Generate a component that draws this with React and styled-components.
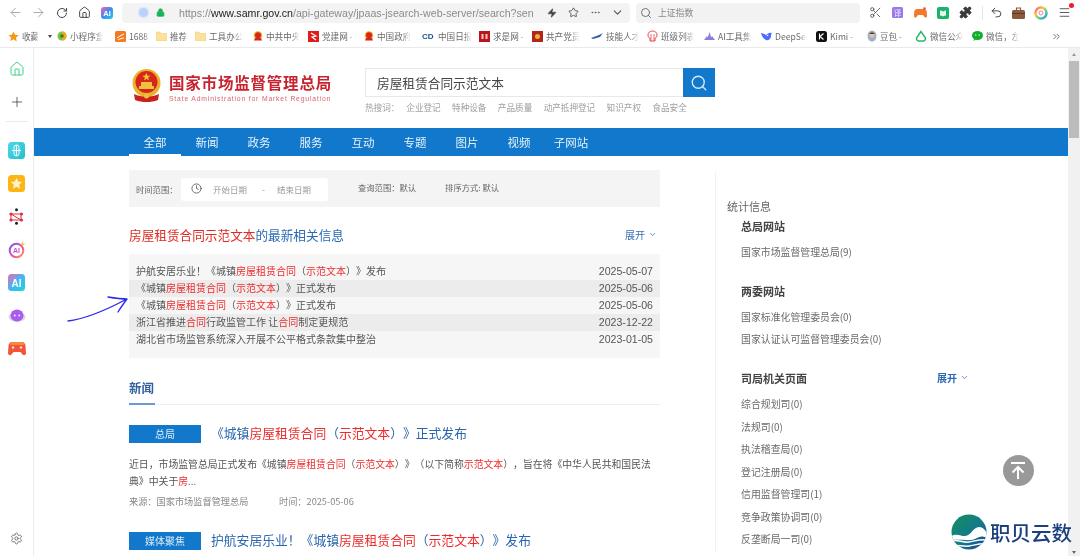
import React from 'react'
import styled, { createGlobalStyle } from 'styled-components'
import {
  ArrowLeft, ArrowRight, RotateCw, Home, Zap, Star, MoreHorizontal, ChevronDown, Search,
  Scissors, Puzzle, Undo2, Menu, Plus, Clock, Settings, ChevronsRight, Lock
} from 'lucide-react'

const CJK = '"Noto Sans CJK SC", "Liberation Sans", sans-serif'
const BLUE = '#1178cb'
const RED = '#ee2b2b'

const GlobalStyle = createGlobalStyle`
  html, body { margin: 0; padding: 0; background: #fff; overflow: hidden; }
  body { font-family: ${CJK}; text-spacing-trim: space-all; }
  * { box-sizing: border-box; }
`

const Em = styled.span`
  color: ${RED};
`

const Page = styled.div`
  position: relative;
  width: 1080px;
  height: 556px;
  overflow: hidden;
  display: flex;
  flex-direction: column;
  background: #fff;
  filter: blur(0.45px);
`

/* browser chrome */
const Toolbar = styled.div`
  height: 24px;
  display: flex;
  align-items: center;
  padding-left: 4px;
  padding-top: 1px;
  flex: none;
`

const Cell = styled.div`
  width: ${p => p.$w || 23}px;
  height: 20px;
  flex: none;
  display: flex;
  align-items: center;
  justify-content: center;
  color: ${p => p.$color || '#444'};
`

const UrlBar = styled.div`
  width: 508px;
  height: 20px;
  margin-left: 5px;
  background: #f3f3f3;
  border-radius: 4px;
  display: flex;
  align-items: center;
  padding-left: 17px;
  flex: none;
`

const UrlDot = styled.div`
  width: 9px;
  height: 9px;
  border-radius: 50%;
  background: #b9d2fb;
  box-shadow: 0 0 0 1.5px #dfe9fb;
  margin-right: 8px;
`

const UrlText = styled.div`
  margin-left: 14px;
  width: 356px;
  overflow: hidden;
  white-space: nowrap;
  font: 10.65px "Liberation Sans", sans-serif;
  color: #8b8b8b;
  b { font-weight: 400; color: #222; }
`

const UrlActions = styled.div`
  margin-left: auto;
  display: flex;
  padding-right: 2px;
`

const SearchBar = styled.div`
  width: 224px;
  height: 20px;
  margin-left: 6px;
  background: #f2f2f2;
  border-radius: 4px;
  display: flex;
  align-items: center;
  padding-left: 4px;
  gap: 6px;
  flex: none;
  font-size: 8.8px;
  color: #888;
`

const ToolIcons = styled.div`
  margin-left: 4px;
  display: flex;
  align-items: center;
  position: relative;
`

const ToolDivider = styled.div`
  width: 1px;
  height: 14px;
  background: #e6e6e6;
  margin: 0 3px 0 5px;
`

const RedDot = styled.div`
  position: absolute;
  right: 1.5px;
  top: 0;
  width: 5px;
  height: 5px;
  border-radius: 50%;
  background: #f01c2c;
`

const Bookmarks = styled.div`
  height: 24px;
  display: flex;
  align-items: center;
  padding-left: 8px;
  padding-top: 1px;
  border-bottom: 1px solid #eaeaea;
  flex: none;
`

const Bookmark = styled.div`
  width: ${p => p.$w}px;
  flex: none;
  display: flex;
  align-items: center;
  gap: 3px;
  overflow: hidden;
  position: relative;
`

const BookmarkText = styled.span`
  font-size: 8.6px;
  color: #6a6a6a;
  white-space: nowrap;
  width: ${p => p.$w}px;
  overflow: hidden;
  flex: none;
  -webkit-mask-image: linear-gradient(90deg, #000 75%, transparent);
`

const Caret = styled.span`
  width: 0;
  height: 0;
  margin-left: 6px;
  border-left: 2.5px solid transparent;
  border-right: 2.5px solid transparent;
  border-top: 3px solid #444;
`

const More = styled.div`
  margin-left: 0;
  color: #666;
  display: flex;
`

/* page body */
const Body = styled.div`
  flex: 1;
  min-height: 0;
  display: flex;
`

const Sidebar = styled.aside`
  width: 34px;
  flex: none;
  border-right: 1px solid #ececec;
  display: flex;
  flex-direction: column;
  padding-top: 4px;
  padding-bottom: 1px;
`

const SideCell = styled.div`
  height: 33px;
  width: 33px;
  display: flex;
  align-items: center;
  justify-content: center;
  flex: none;
`

const SideDivider = styled.div`
  height: 1px;
  width: 22px;
  background: #eaeaea;
  margin: 3px 0 12px 6px;
  flex: none;
`

const SideBottom = styled.div`
  margin-top: auto;
`

const Main = styled.main`
  flex: 1;
  min-width: 0;
  overflow: hidden;
`

const Header = styled.header`
  height: 80px;
  padding-left: 97px;
  display: flex;
`

const Emblem = styled.div`
  margin-top: 21px;
  width: 32px;
  flex: none;
`

const Brand = styled.div`
  margin-left: 6px;
  padding-top: 25px;
  width: 196px;
  flex: none;
`

const BrandName = styled.div`
  font-size: 15.5px;
  line-height: 18px;
  font-weight: 700;
  letter-spacing: 0.8px;
  color: #c8242f;
  white-space: nowrap;
`

const BrandSub = styled.div`
  font: 6.8px/10px "Liberation Sans", sans-serif;
  letter-spacing: 0.83px;
  color: #d9646c;
  white-space: nowrap;
  margin-top: 3px;
`

const SearchCol = styled.div`
  padding-top: 20px;
  width: 350px;
  flex: none;
`

const SearchBox = styled.div`
  height: 29px;
  display: flex;
  border: 1px solid #e8e8e8;
  border-right: 0;
  width: 350px;
`

const SearchInput = styled.div`
  flex: 1;
  padding-left: 11px;
  font-size: 12.7px;
  line-height: 27px;
  color: #444;
`

const SearchButton = styled.div`
  width: 32px;
  height: 29px;
  margin-top: -1px;
  background: ${BLUE};
  display: flex;
  align-items: center;
  justify-content: center;
  color: #d8ebfb;
`

const HotWords = styled.div`
  display: flex;
  gap: 11.4px;
  margin-top: 4px;
  font-size: 8.6px;
  line-height: 12px;
  color: #a0a0a0;
  white-space: nowrap;
`

const HotLabel = styled.span`
  margin-right: -4.5px;
`

const NavBar = styled.nav`
  height: 28px;
  background: ${BLUE};
  padding-left: 95px;
  display: flex;
`

const NavTab = styled.div`
  width: 52px;
  text-align: center;
  font-size: 11.5px;
  line-height: 29px;
  color: #e6f2fb;
  white-space: nowrap;
  border-bottom: 2px solid ${p => (p.$active ? '#fff' : 'transparent')};
`

const Content = styled.div`
  display: flex;
  padding-left: 95px;
`

const Results = styled.section`
  width: 531px;
  flex: none;
  padding-top: 14px;
`

const FilterBar = styled.div`
  height: 37px;
  background: #f4f4f4;
  display: flex;
  align-items: center;
  padding-left: 7px;
  font-size: 8.3px;
  color: #666;
  white-space: nowrap;
`

const FilterLabel = styled.span`
  width: 45px;
  flex: none;
`

const DateBox = styled.div`
  width: 147px;
  height: 23px;
  background: #fff;
  border-radius: 3px;
  display: flex;
  align-items: center;
  padding-left: 10px;
  padding-bottom: 2px;
  color: #999;
  margin-top: 2px;
  flex: none;
`

const DateText = styled.span`
  font-size: 8.5px;
  margin-left: ${p => p.$gap}px;
`

const FilterItem = styled.span`
  margin-left: ${p => p.$gap}px;
  margin-top: -4px;
`

const LatestHead = styled.div`
  display: flex;
  align-items: center;
  justify-content: space-between;
  height: 20px;
  margin-top: 17px;
  font-size: 12.65px;
  color: #2a6ab4;
  white-space: nowrap;
`

const LatestTitle = styled.div`
  color: #2a6ab4;
  span { color: #df2a22; }
`

const Expand = styled.div`
  display: flex;
  align-items: center;
  gap: 3px;
  font-size: 10px;
  color: ${p => p.$color || '#3b70b8'};
  font-weight: ${p => (p.$bold ? 700 : 400)};
  padding-right: ${p => p.$pad || 0}px;
`

const LatestPanel = styled.div`
  margin-top: 10px;
  height: 104px;
  padding-top: 8.5px;
  background: #f6f6f6;
`

const LatestRow = styled.div`
  height: 17px;
  padding: 0 7px;
  display: flex;
  align-items: center;
  justify-content: space-between;
  font-size: 10px;
  color: #555;
  white-space: nowrap;
  background: ${p => (p.$shade ? '#ececec' : 'transparent')};
`

const RowText = styled.span`
  padding-bottom: 2px;
`

const RowDate = styled.span`
  font: 10.6px "Liberation Sans", sans-serif;
  color: #555;
`

const SectionHead = styled.div`
  margin-top: 20px;
  height: 27px;
  border-bottom: 1px solid #eeeeee;
  display: flex;
`

const SectionTitle = styled.div`
  width: 26px;
  height: 27px;
  border-bottom: 2px solid #6f97cf;
  font-size: 12.5px;
  line-height: 19px;
  font-weight: 700;
  color: #31609f;
  white-space: nowrap;
`

const NewsItem = styled.article`
  margin-top: ${p => p.$top}px;
`

const NewsHead = styled.div`
  display: flex;
  align-items: center;
  gap: 10px;
`

const Tag = styled.span`
  width: 72px;
  height: 18px;
  background: ${BLUE};
  color: #dcecf9;
  text-align: center;
  font-size: 10px;
  line-height: 18px;
  flex: none;
`

const NewsTitle = styled.h3`
  margin: 0;
  padding-bottom: 2px;
  font-size: 12.8px;
  line-height: 18px;
  font-weight: 400;
  color: #2a66ae;
  white-space: nowrap;
`

const NewsText = styled.p`
  margin: 12px 0 0;
  font-size: 9.85px;
  line-height: 17px;
  color: #555;
`

const NewsMeta = styled.div`
  margin-top: 3px;
  display: flex;
  font-size: 9.2px;
  line-height: 16px;
  color: #888;
  white-space: nowrap;
`

const MetaSource = styled.span`
  width: 150px;
  flex: none;
`

const Stats = styled.aside`
  margin-left: 55px;
  margin-top: 16px;
  width: 290px;
  flex: none;
  border-left: 1px solid #f0f0f0;
  padding: 26px 0 0 11px;
`

const StatsTitle = styled.div`
  font-size: 11px;
  line-height: 16px;
  color: #666;
`

const StatsGroup = styled.div`
  padding-left: 14px;
  margin-top: ${p => p.$top}px;
`

const GroupHead = styled.div`
  height: 22.5px;
  width: 228px;
  display: flex;
  align-items: center;
  justify-content: space-between;
  font-size: 11px;
  font-weight: 700;
  color: #444;
  margin-bottom: ${p => p.$after || 3}px;
`

const StatItem = styled.div`
  height: 22.5px;
  line-height: 22.5px;
  font-size: 9.9px;
  color: #6a6a6a;
  white-space: nowrap;
`

const Scrollbar = styled.div`
  width: 12px;
  flex: none;
  background: #f1f1f1;
  display: flex;
  flex-direction: column;
  align-items: center;
  padding-top: 5px;
`

const ScrollArrow = styled.div`
  width: 0;
  height: 0;
  border-left: 2.5px solid transparent;
  border-right: 2.5px solid transparent;
  ${p => (p.$down ? 'border-top: 3px solid #666; margin-top: auto; margin-bottom: 2px;' : 'border-bottom: 3px solid #999;')}
`

const ScrollThumb = styled.div`
  width: 10px;
  height: 77px;
  margin-top: 5px;
  background: #bcbcbc;
`

/* things lying over the page */
const Annotation = styled.svg`
  position: absolute;
  left: 60px;
  top: 290px;
`

const BackTop = styled.div`
  position: absolute;
  left: 1002.5px;
  top: 454.5px;
  width: 31px;
  height: 31px;
  border-radius: 50%;
  background: #999;
  display: flex;
  align-items: center;
  justify-content: center;
`

const Watermark = styled.div`
  position: absolute;
  left: 951px;
  top: 514px;
  display: flex;
  align-items: center;
  gap: 3px;
`

const WatermarkText = styled.span`
  font-size: 20.5px;
  line-height: 36px;
  font-weight: 500;
  color: #1c3f7e;
  white-space: nowrap;
`

const CdMark = styled.span`
  font: 700 8px "Liberation Sans", sans-serif;
  color: #174f96;
  width: 13px;
`

const Favicon = ({ kind }) => {
  switch (kind) {
    case 'star':
      return <svg width="11" height="11" viewBox="0 0 24 24"><path d="M12 1l3.4 7.3 7.9 1-5.8 5.5 1.5 7.9L12 18l-7 3.7 1.500-7.900L.7 9.300l7.900-1z" fill="#f39a12" /></svg>
    case 'mini':
      return <svg width="10" height="10" viewBox="0 0 10 10"><circle cx="5" cy="5" r="4.500" fill="#7cc243" /><path d="M5 .5a4.500 4.500 0 0 1 0 9z" fill="#f2a91c" /><circle cx="5" cy="5" r="1.800" fill="#2f7d3a" /></svg>
    case '1688':
      return <svg width="11" height="11" viewBox="0 0 11 11"><rect width="11" height="11" rx="1.500" fill="#f47a20" /><path d="M2 7c2-1 4-3 7-4M3 9c2-1 4-2 6-2" stroke="#fff" strokeWidth="1" fill="none" /></svg>
    case 'folder':
      return <svg width="11" height="10" viewBox="0 0 11 10"><path d="M0 1h4l1 1.500h6V10H0z" fill="#fbe19a" stroke="#eccb70" strokeWidth=".5" /></svg>
    case 'gov':
      return <svg width="10" height="11" viewBox="0 0 10 11"><circle cx="5" cy="4.500" r="4.200" fill="#e8b023" /><circle cx="5" cy="4.200" r="3" fill="#d9261c" /><path d="M1 9.500h8L8 7H2z" fill="#d9261c" /></svg>
    case 'party':
      return <svg width="11" height="11" viewBox="0 0 11 11"><rect width="11" height="11" fill="#e01b1b" /><path d="M3 2l5 3-4 1 4 3" stroke="#fff" strokeWidth="1.200" fill="none" /></svg>
    case 'cd':
      return <CdMark>CD</CdMark>
    case 'qs':
      return <svg width="11" height="11" viewBox="0 0 11 11"><rect width="11" height="11" fill="#b9151b" /><path d="M2.500 3h2v5h-2zM6.500 3h2v5h-2z" fill="#f3c9c9" /></svg>
    case 'cp':
      return <svg width="11" height="11" viewBox="0 0 11 11"><rect width="11" height="11" fill="#b3261c" /><circle cx="5.500" cy="5.500" r="2.500" fill="#e9b53a" /></svg>
    case 'skill':
      return <svg width="12" height="8" viewBox="0 0 12 8"><path d="M0 6l8-3 4-2-3 4-7 2z" fill="#3a5f9e" /></svg>
    case 'class':
      return <svg width="11" height="12" viewBox="0 0 11 12"><path d="M5.500 1C3 1 1 2.500 1 5c0 2 1 3 2 3v3h5V8c1 0 2-1 2-3 0-2.500-2-4-4.500-4z" fill="none" stroke="#e8474c" strokeWidth="1" /><path d="M4 4v7M7 4v7" stroke="#e8474c" strokeWidth=".8" /></svg>
    case 'aitools':
      return <svg width="11" height="8" viewBox="0 0 11 8"><path d="M0 8l3-4 2 4zM3 8l2.500-8L8 8zM6 8l2-4 3 4z" fill="#8f7be0" /></svg>
    case 'deepseek':
      return <svg width="11" height="9" viewBox="0 0 11 9"><path d="M0 1c2 0 3 1 5 2 2-1 3-3 6-2-1 1-1 2-1 3 0 3-3 5-5 4S1 5 0 1z" fill="#4d6bfe" /><circle cx="6.500" cy="3.500" r=".8" fill="#fff" /></svg>
    case 'kimi':
      return <svg width="11" height="11" viewBox="0 0 11 11"><rect width="11" height="11" rx="2.500" fill="#111" /><path d="M3.500 2.500v6M7.500 2.500L4 5.500l3.500 3" stroke="#fff" strokeWidth="1.100" fill="none" /></svg>
    case 'doubao':
      return <svg width="10" height="12" viewBox="0 0 10 12"><ellipse cx="5" cy="6" rx="4.500" ry="5.500" fill="#9db2c8" /><circle cx="5" cy="5" r="2.500" fill="#e8c2a8" /><path d="M2.500 4c0-2 5-2 5 0z" fill="#4b3a30" /></svg>
    case 'mp':
      return <svg width="12" height="12" viewBox="0 0 12 12"><path d="M6 1.500L1.500 8a2.500 2.500 0 0 0 2 3h5a2.500 2.500 0 0 0 2-3z" fill="none" stroke="#27b56a" strokeWidth="1.500" /></svg>
    case 'wechat':
      return <svg width="11" height="10" viewBox="0 0 11 10"><ellipse cx="5.500" cy="4.500" rx="5.500" ry="4.500" fill="#12ad2b" /><path d="M2 8l-.5 2L4 8.500z" fill="#12ad2b" /><circle cx="3.800" cy="4" r=".7" fill="#fff" /><circle cx="7.200" cy="4" r=".7" fill="#fff" /></svg>
    default:
      return null
  }
}

const BOOKMARKS = [
  { kind: 'star', label: '收藏', w: 49, text: 17, caret: true },
  { kind: 'mini', label: '小程序盒', w: 58, text: 33 },
  { kind: '1688', label: '1688', w: 41, text: 21 },
  { kind: 'folder', label: '推荐', w: 39, text: 18 },
  { kind: 'folder', label: '工具办公', w: 58, text: 34 },
  { kind: 'gov', label: '中共中央', w: 55, text: 34 },
  { kind: 'party', label: '党建网 -', w: 56, text: 34 },
  { kind: 'gov', label: '中国政府', w: 58, text: 34 },
  { kind: 'cd', label: '中国日报', w: 57, text: 34 },
  { kind: 'qs', label: '求是网 -', w: 53, text: 34 },
  { kind: 'cp', label: '共产党员', w: 59, text: 34 },
  { kind: 'skill', label: '技能人才', w: 56, text: 33 },
  { kind: 'class', label: '班级列表', w: 57, text: 33 },
  { kind: 'aitools', label: 'AI工具集', w: 57, text: 34 },
  { kind: 'deepseek', label: 'DeepSeek', w: 55, text: 32 },
  { kind: 'kimi', label: 'Kimi -', w: 51, text: 26 },
  { kind: 'doubao', label: '豆包 -', w: 48, text: 25 },
  { kind: 'mp', label: '微信公众', w: 57, text: 33 },
  { kind: 'wechat', label: '微信，左', w: 79, text: 33 }
]

const HOT_WORDS = ['企业登记', '特种设备', '产品质量', '动产抵押登记', '知识产权', '食品安全']
const TABS = ['全部', '新闻', '政务', '服务', '互动', '专题', '图片', '视频', '子网站']

const RENT = <Em>房屋租赁合同</Em>
const SAMPLE = <Em>示范文本</Em>
const HOUSING = <>《城镇{RENT}（{SAMPLE}）》</>

const SIDE_APPS = [
  <svg width="17" height="17" viewBox="0 0 17 17" key="a"><defs><linearGradient id="sa" x1="0" y1="0" x2="1" y2="1"><stop offset="0" stopColor="#4fd5ec" /><stop offset="1" stopColor="#1fc3c9" /></linearGradient></defs><rect width="17" height="17" rx="3.500" fill="url(#sa)" /><path d="M8.500 3v11M4 8.500h9" stroke="#fff" strokeWidth="1.200" /><rect x="6" y="3" width="5" height="11" rx="2.500" fill="none" stroke="#fff" strokeWidth="1" /></svg>,
  <svg width="17" height="17" viewBox="0 0 17 17" key="b"><rect width="17" height="17" rx="3.500" fill="#fdb515" /><path d="M8.500 3l1.700 3.600 3.900.5-2.900 2.700.8 3.900-3.500-2-3.500 2 .8-3.900L2.900 7.100l3.900-.5z" fill="#fff4c8" /></svg>,
  <svg width="17" height="17" viewBox="0 0 17 17" key="c"><path d="M3 6h10v6H3zM3 6l10 6" stroke="#e03040" strokeWidth="1" fill="none" /><circle cx="8.500" cy="1.800" r="1.500" fill="#222" /><circle cx="8.500" cy="15.200" r="1.500" fill="#222" /><circle cx="3" cy="6" r="1.600" fill="#e03040" /><circle cx="13.500" cy="6" r="1.600" fill="#e03040" /><circle cx="3" cy="12" r="1.600" fill="#e03040" /><circle cx="13.500" cy="12" r="1.600" fill="#e03040" /></svg>,
  <svg width="18" height="18" viewBox="0 0 18 18" key="d"><defs><linearGradient id="sd" x1="0" y1="0" x2="1" y2="1"><stop offset="0" stopColor="#7a55f0" /><stop offset=".6" stopColor="#ee4fb0" /><stop offset="1" stopColor="#ffa53a" /></linearGradient></defs><circle cx="8.500" cy="9.500" r="6.800" fill="none" stroke="url(#sd)" strokeWidth="2" /><path d="M14.500 .5l.8 2 2 .8-2 .8-.8 2-.8-2-2-.8 2-.8z" fill="#f7c23c" /><text x="8.500" y="12" fontSize="7" fontWeight="700" textAnchor="middle" fill="#d04fc8" fontFamily="Liberation Sans">AI</text></svg>,
  <svg width="17" height="17" viewBox="0 0 17 17" key="e"><defs><linearGradient id="se" x1="0" y1="0" x2="1" y2="1"><stop offset="0" stopColor="#ff62b0" /><stop offset=".5" stopColor="#3fb8f5" /><stop offset="1" stopColor="#1ed3d8" /></linearGradient></defs><rect width="17" height="17" rx="3.500" fill="url(#se)" /><text x="8.500" y="12.500" fontSize="10" fontWeight="700" textAnchor="middle" fill="#fff" fontFamily="Liberation Sans">AI</text></svg>,
  <svg width="18" height="14" viewBox="0 0 18 14" key="f"><ellipse cx="9" cy="8" rx="8.500" ry="5" fill="#d9d9de" /><ellipse cx="9" cy="6.500" rx="6.500" ry="6" fill="#a95cf0" /><circle cx="6.800" cy="6.500" r="1" fill="#f0e6ff" /><circle cx="11.200" cy="6.500" r="1" fill="#f0e6ff" /></svg>,
  <svg width="18" height="15" viewBox="0 0 18 15" key="g"><path d="M4 1h10c2 0 3 1 3.500 4L18 12c0 2-2 3-3.500 1.500L12.500 11h-7l-2 2.500C2 15 0 14 0 12l.5-7C1 2 2 1 4 1z" fill="#f2553c" /><rect x="2" y="1" width="14" height="3" rx="1.500" fill="#f88a3e" /><circle cx="5" cy="6.500" r="1.200" fill="#ffd9c7" /><circle cx="13" cy="6.500" r="1.200" fill="#ffd9c7" /></svg>
]

export default function App() {
  return (
    <Page>
      <GlobalStyle />
      <Toolbar>
        <Cell $color="#aaa"><ArrowLeft size={15} strokeWidth={1.600} /></Cell>
        <Cell $color="#aaa"><ArrowRight size={15} strokeWidth={1.600} /></Cell>
        <Cell><RotateCw size={12} strokeWidth={2} /></Cell>
        <Cell><Home size={13} strokeWidth={1.800} /></Cell>
        <Cell $w={21}>
          <svg width="12" height="12" viewBox="0 0 12 12">
            <defs><linearGradient id="ai" x1="0" y1="0" x2="1" y2="1"><stop offset="0" stopColor="#ff5db1" /><stop offset=".5" stopColor="#3e8cf5" /><stop offset="1" stopColor="#19d3dc" /></linearGradient></defs>
            <rect width="12" height="12" rx="3" fill="url(#ai)" />
            <text x="6" y="9" fontSize="7.500" fontWeight="700" textAnchor="middle" fill="#fff" fontFamily="Liberation Sans">AI</text>
          </svg>
        </Cell>
        <UrlBar>
          <UrlDot />
          <Lock size={9} color="#16b25a" fill="#16b25a" strokeWidth={2} />
          <UrlText>https://<b>www.samr.gov.cn</b>/api-gateway/jpaas-jsearch-web-server/search?sen</UrlText>
          <UrlActions>
            <Cell $w={22}><Zap size={10} fill="#444" strokeWidth={1.500} /></Cell>
            <Cell $w={21}><Star size={11} strokeWidth={1.800} /></Cell>
            <Cell $w={22} $color="#666"><MoreHorizontal size={11} /></Cell>
            <Cell $w={22} $color="#555"><ChevronDown size={13} /></Cell>
          </UrlActions>
        </UrlBar>
        <SearchBar>
          <Search size={12} color="#555" strokeWidth={1.600} />
          上证指数
        </SearchBar>
        <ToolIcons>
          <Cell $w={22.500} $color="#555"><Scissors size={13} strokeWidth={1.600} /></Cell>
          <Cell $w={22.500}>
            <svg width="11" height="11" viewBox="0 0 11 11"><rect width="11" height="11" rx="1.500" fill="#9a78ee" /><text x="5.500" y="8.500" fontSize="7.500" textAnchor="middle" fill="#f2ecff" fontFamily="Noto Sans CJK SC">译</text></svg>
          </Cell>
          <Cell $w={22.500}>
            <svg width="13" height="11" viewBox="0 0 13 11"><path d="M3 2h7c1.500 0 2.500 1 2.800 3l.2 4c0 1.500-1.500 2-2.500 1L9 8H4l-1.500 2C1.500 11 0 10.500 0 9l.2-4C.5 3 1.500 2 3 2z" fill="#f4782d" /><circle cx="10.500" cy="1.500" r="1.300" fill="#f04f2d" /></svg>
          </Cell>
          <Cell $w={22.500}>
            <svg width="12" height="12" viewBox="0 0 12 12"><rect width="12" height="12" rx="2" fill="#19b36b" /><path d="M3 3.500c1 0 2 .3 3 1 1-.7 2-1 3-1v5c-1 0-2 .3-3 1-1-.7-2-1-3-1z" fill="#e7f8ef" /></svg>
          </Cell>
          <Cell $w={22.500} $color="#3a3a3a"><Puzzle size={13} fill="#3a3a3a" strokeWidth={1.500} /></Cell>
          <ToolDivider />
          <Cell $w={22.500}><Undo2 size={13} strokeWidth={1.800} /></Cell>
          <Cell $w={21}>
            <svg width="13" height="12" viewBox="0 0 13 12"><rect y="3" width="13" height="9" rx="1.500" fill="#8a5a3a" /><path d="M4.500 3V1h4v2" stroke="#8a5a3a" strokeWidth="1.200" fill="none" /><rect y="6" width="13" height="1" fill="#5f3b24" /></svg>
          </Cell>
          <Cell $w={24}>
            <svg width="14" height="14" viewBox="0 0 14 14"><defs><linearGradient id="cl" x1="0" y1="0" x2="1" y2="1"><stop offset="0" stopColor="#ff4f8b" /><stop offset=".35" stopColor="#ffc92e" /><stop offset=".7" stopColor="#35d39a" /><stop offset="1" stopColor="#5b7bff" /></linearGradient></defs><circle cx="7" cy="7" r="5.500" fill="#fff" stroke="url(#cl)" strokeWidth="2.500" /><circle cx="7" cy="7" r="2" fill="none" stroke="#f07ab0" strokeWidth="1" /></svg>
          </Cell>
          <Cell $w={22.500} $color="#444"><Menu size={13} strokeWidth={1.600} /></Cell>
          <RedDot />
        </ToolIcons>
      </Toolbar>

      <Bookmarks>
        {BOOKMARKS.map(b => (
          <Bookmark key={b.label} $w={b.w}>
            <Favicon kind={b.kind} />
            <BookmarkText $w={b.text}>{b.label}</BookmarkText>
            {b.caret && <Caret />}
          </Bookmark>
        ))}
        <More><ChevronsRight size={11} /></More>
      </Bookmarks>

      <Body>
        <Sidebar>
          <SideCell><Home size={16} color="#45cf88" strokeWidth={1.500} /></SideCell>
          <SideCell><Plus size={16} color="#444" strokeWidth={1.200} /></SideCell>
          <SideDivider />
          {SIDE_APPS.map(icon => <SideCell key={icon.key}>{icon}</SideCell>)}
          <SideBottom>
            <SideCell><Settings size={13} color="#666" strokeWidth={1.600} /></SideCell>
          </SideBottom>
        </Sidebar>

        <Main>
          <Header>
            <Emblem>
              <svg width="31" height="33" viewBox="0 0 31 33">
                <circle cx="15.500" cy="14" r="14" fill="#e9b32a" />
                <circle cx="15.500" cy="13" r="11" fill="#d8261c" />
                <path d="M15.500 4l1 2.800h3l-2.400 1.800.9 2.900-2.500-1.800-2.500 1.800.9-2.900L11 6.800h3z" fill="#f5c93a" />
                <path d="M8 17h15v3H8zM10 13h11v4H10z" fill="#f0c040" />
                <path d="M3 25c4 2 8 2.500 12.500 2.500S24 27 28 25l-1 6c-4 1.500-7 2-11.500 2S8 32.500 4 31z" fill="#c9221a" />
                <circle cx="15.500" cy="27" r="2.500" fill="#f0c040" />
              </svg>
            </Emblem>
            <Brand>
              <BrandName>国家市场监督管理总局</BrandName>
              <BrandSub>State Administration for Market Regulation</BrandSub>
            </Brand>
            <SearchCol>
              <SearchBox>
                <SearchInput>房屋租赁合同示范文本</SearchInput>
                <SearchButton><Search size={18} strokeWidth={1.800} /></SearchButton>
              </SearchBox>
              <HotWords>
                <HotLabel>热搜词：</HotLabel>
                {HOT_WORDS.map(w => <span key={w}>{w}</span>)}
              </HotWords>
            </SearchCol>
          </Header>

          <NavBar>
            {TABS.map((t, i) => <NavTab key={t} $active={i === 0}>{t}</NavTab>)}
          </NavBar>

          <Content>
            <Results>
              <FilterBar>
                <FilterLabel>时间范围：</FilterLabel>
                <DateBox>
                  <Clock size={11} color="#555" strokeWidth={1.800} />
                  <DateText $gap={11}>开始日期</DateText>
                  <DateText $gap={15}>-</DateText>
                  <DateText $gap={12}>结束日期</DateText>
                </DateBox>
                <FilterItem $gap={30}>查询范围：默认</FilterItem>
                <FilterItem $gap={29}>排序方式: 默认</FilterItem>
              </FilterBar>

              <LatestHead>
                <LatestTitle><span>房屋租赁合同示范文本</span>的最新相关信息</LatestTitle>
                <Expand $pad={3}>展开 <ChevronDown size={9} /></Expand>
              </LatestHead>

              <LatestPanel>
                <LatestRow>
                  <RowText>护航安居乐业！{HOUSING}发布</RowText>
                  <RowDate>2025-05-07</RowDate>
                </LatestRow>
                <LatestRow $shade>
                  <RowText>{HOUSING}正式发布</RowText>
                  <RowDate>2025-05-06</RowDate>
                </LatestRow>
                <LatestRow>
                  <RowText>{HOUSING}正式发布</RowText>
                  <RowDate>2025-05-06</RowDate>
                </LatestRow>
                <LatestRow $shade>
                  <RowText>浙江省推进<Em>合同</Em>行政监管工作 让<Em>合同</Em>制定更规范</RowText>
                  <RowDate>2023-12-22</RowDate>
                </LatestRow>
                <LatestRow>
                  <RowText>湖北省市场监管系统深入开展不公平格式条款集中整治</RowText>
                  <RowDate>2023-01-05</RowDate>
                </LatestRow>
              </LatestPanel>

              <SectionHead>
                <SectionTitle>新闻</SectionTitle>
              </SectionHead>

              <NewsItem $top={19}>
                <NewsHead>
                  <Tag>总局</Tag>
                  <NewsTitle>{HOUSING}正式发布</NewsTitle>
                </NewsHead>
                <NewsText>
                  近日，市场监管总局正式发布{HOUSING}（以下简称{SAMPLE}），旨在将《中华人民共和国民法典》中关于<Em>房</Em>...
                </NewsText>
                <NewsMeta>
                  <MetaSource>来源：国家市场监督管理总局</MetaSource>
                  <span>时间：2025-05-06</span>
                </NewsMeta>
              </NewsItem>

              <NewsItem $top={22}>
                <NewsHead>
                  <Tag>媒体聚焦</Tag>
                  <NewsTitle>护航安居乐业！{HOUSING}发布</NewsTitle>
                </NewsHead>
              </NewsItem>
            </Results>

            <Stats>
              <StatsTitle>统计信息</StatsTitle>
              <StatsGroup $top={1}>
                <GroupHead>总局网站</GroupHead>
                <StatItem>国家市场监督管理总局(9)</StatItem>
              </StatsGroup>
              <StatsGroup $top={17}>
                <GroupHead>两委网站</GroupHead>
                <StatItem>国家标准化管理委员会(0)</StatItem>
                <StatItem>国家认证认可监督管理委员会(0)</StatItem>
              </StatsGroup>
              <StatsGroup $top={16}>
                <GroupHead $after={4}>
                  司局机关页面
                  <Expand $color="#2a6ab4" $bold>展开 <ChevronDown size={9} /></Expand>
                </GroupHead>
                <StatItem>综合规划司(0)</StatItem>
                <StatItem>法规司(0)</StatItem>
                <StatItem>执法稽查局(0)</StatItem>
                <StatItem>登记注册局(0)</StatItem>
                <StatItem>信用监督管理司(1)</StatItem>
                <StatItem>竞争政策协调司(0)</StatItem>
                <StatItem>反垄断局一司(0)</StatItem>
              </StatsGroup>
            </Stats>
          </Content>
        </Main>

        <Scrollbar>
          <ScrollArrow />
          <ScrollThumb />
          <ScrollArrow $down />
        </Scrollbar>
      </Body>

      <Annotation width="70" height="36" viewBox="0 0 70 36">
        <path d="M8 31c18-2 36-10 57-21M48 7c6 1 12 2 19 2-3 4-6 8-9 13" fill="none" stroke="#2a2aee" strokeWidth="1.300" strokeLinecap="round" strokeLinejoin="round" />
      </Annotation>

      <BackTop>
        <svg width="18" height="19" viewBox="0 0 18 19">
          <path d="M2 2h14M9 18V6M3.500 11.500L9 6l5.500 5.500" fill="none" stroke="#fff" strokeWidth="2" />
        </svg>
      </BackTop>

      <Watermark>
        <svg width="36" height="36" viewBox="0 0 36 36">
          <defs>
            <linearGradient id="wm" x1="0" y1="0" x2="1" y2="1">
              <stop offset="0" stopColor="#12905f" />
              <stop offset=".55" stopColor="#137a8a" />
              <stop offset="1" stopColor="#1c3f90" />
            </linearGradient>
            <clipPath id="wc"><circle cx="18" cy="18" r="17.500" /></clipPath>
          </defs>
          <g clipPath="url(#wc)">
            <rect width="36" height="36" fill="url(#wm)" />
            <path d="M0 22c6-3 10 0 14 0 6 0 8-9 14-9 4 0 6 3 8 6v5c-4-2-7-2-10 0-6 4-14 1-26 2z" fill="#fff" />
            <path d="M0 27c6-2 12 2 18 1s12-3 18-2M0 32c6-2 12 1 18 0s12-3 18-2" stroke="#fff" strokeWidth="1.500" fill="none" />
          </g>
        </svg>
        <WatermarkText>职贝云数</WatermarkText>
      </Watermark>
    </Page>
  )
}
